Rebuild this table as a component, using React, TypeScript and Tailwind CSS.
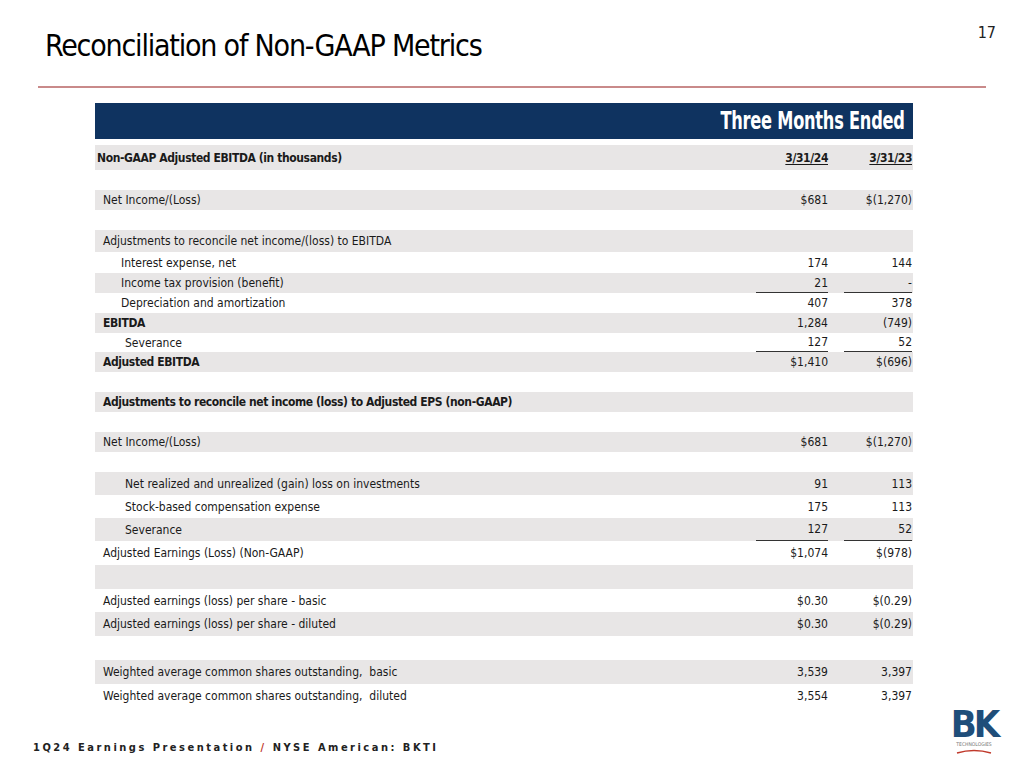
import React from "react";

type Row = {
  label?: string;
  v1?: string;
  v2?: string;
  gray?: boolean;
  bold?: boolean;
  indent?: number;
  line?: boolean;
  h: number;
};

const rows: Row[] = [
  { label: "Net Income/(Loss)", v1: "$681", v2: "$(1,270)", gray: true, h: 20 },
  { h: 20 },
  { label: "Adjustments to reconcile net income/(loss) to EBITDA", gray: true, h: 22 },
  { label: "Interest expense, net", v1: "174", v2: "144", indent: 18, h: 21 },
  { label: "Income tax provision (benefit)", v1: "21", v2: "-", gray: true, indent: 18, line: true, h: 20 },
  { label: "Depreciation and amortization", v1: "407", v2: "378", indent: 18, h: 20 },
  { label: "EBITDA", v1: "1,284", v2: "(749)", gray: true, bold: true, h: 20 },
  { label: "Severance", v1: "127", v2: "52", indent: 22, line: true, h: 19 },
  { label: "Adjusted EBITDA", v1: "$1,410", v2: "$(696)", gray: true, bold: true, h: 20 },
  { h: 20 },
  { label: "Adjustments to reconcile net income (loss) to Adjusted EPS (non-GAAP)", gray: true, bold: true, h: 20 },
  { h: 20 },
  { label: "Net Income/(Loss)", v1: "$681", v2: "$(1,270)", gray: true, h: 20 },
  { h: 20 },
  { label: "Net realized and unrealized (gain) loss on investments", v1: "91", v2: "113", gray: true, indent: 22, h: 23 },
  { label: "Stock-based compensation expense", v1: "175", v2: "113", indent: 22, h: 23 },
  { label: "Severance", v1: "127", v2: "52", gray: true, indent: 22, line: true, h: 23 },
  { label: "Adjusted Earnings (Loss) (Non-GAAP)", v1: "$1,074", v2: "$(978)", h: 24 },
  { gray: true, h: 24 },
  { label: "Adjusted earnings (loss) per share - basic", v1: "$0.30", v2: "$(0.29)", h: 23 },
  { label: "Adjusted earnings (loss) per share - diluted", v1: "$0.30", v2: "$(0.29)", gray: true, h: 24 },
  { h: 24 },
  { label: "Weighted average common shares outstanding,  basic", v1: "3,539", v2: "3,397", gray: true, h: 24 },
  { label: "Weighted average common shares outstanding,  diluted", v1: "3,554", v2: "3,397", h: 23 },
];

const FONT = "font-['DejaVu_Sans_Condensed',Lato,sans-serif]";

const TableRow = ({ row }: { row: Row }) => (
  <div
    className={`flex items-center ${row.gray ? "bg-[#e8e6e6]" : "bg-white"}`}
    style={{ height: row.h }}
  >
    <div
      className={`flex-1 truncate whitespace-pre ${row.bold ? "font-bold tracking-[-0.4px]" : ""}`}
      style={{ paddingLeft: 8 + (row.indent ?? 0) }}
    >
      {row.label}
    </div>
    <div
      className={`flex h-full w-[72px] items-center justify-end ${
        row.line ? "border-b border-[#333]" : ""
      }`}
    >
      {row.v1}
    </div>
    <div className="w-[16px]" />
    <div
      className={`flex h-full w-[68px] items-center justify-end ${
        row.line ? "border-b border-[#333]" : ""
      }`}
    >
      {row.v2}
    </div>
    <div className="w-[1px]" />
  </div>
);

const Logo = () => (
  <div className="flex w-[48px] flex-col items-center">
    <div className="text-[38px] font-bold leading-[32px] tracking-[-3px] text-[#1f4e7a]">
      BK
    </div>
    <div className="mt-[1px] text-[5px] leading-[6px] text-[#777]">TECHNOLOGIES</div>
    <svg width="40" height="6" viewBox="0 0 40 6" className="mt-[1px]">
      <path d="M3 5 Q20 0 37 5" fill="none" stroke="#c0392b" strokeWidth="1.6" />
    </svg>
  </div>
);

export default function App() {
  return (
    <div className={`relative flex h-[768px] w-[1024px] flex-col overflow-hidden bg-white text-[#1a1a1a] ${FONT}`}>
      <div className="flex h-[86px] items-start justify-between">
        <h1 className="ml-[45px] mt-[26px] text-[30px] font-normal leading-[40px] tracking-[-1.2px] text-black">
          Reconciliation of Non-GAAP Metrics
        </h1>
        <div className="mr-[28px] mt-[21px] text-[16px] text-[#222]">17</div>
      </div>
      <div className="ml-[38px] h-[2px] w-[948px] bg-[#c98a8a]" />

      <div className="ml-[95px] mt-[15px] w-[818px] text-[12px]">
        <div className="flex h-[36px] items-center justify-end bg-[#0f3360] pr-[8px] text-white">
          <span className="origin-right scale-x-[0.75] text-[24px] font-bold tracking-[-0.3px]">
            Three Months Ended
          </span>
        </div>
        <div className="h-[6px]" />
        <div className="flex h-[25px] items-center bg-[#e8e6e6] font-bold tracking-[-0.4px]">
          <div className="flex-1 pl-[2px]">Non-GAAP Adjusted EBITDA (in thousands)</div>
          <div className="w-[72px] text-right underline underline-offset-2">3/31/24</div>
          <div className="w-[16px]" />
          <div className="w-[68px] text-right underline underline-offset-2">3/31/23</div>
          <div className="w-[1px]" />
        </div>
        <div className="h-[20px]" />
        {rows.map((row, i) => (
          <TableRow key={i} row={row} />
        ))}
      </div>

      <div className="mt-auto flex items-end justify-between pb-[14px]">
        <div className="mb-[-2px] ml-[33px] text-[11px] font-bold tracking-[2.5px] text-[#222]">
          1Q24 Earnings Presentation <span className="text-[#c0392b]">/</span> NYSE American: BKTI
        </div>
        <div className="mr-[26px]">
          <Logo />
        </div>
      </div>
    </div>
  );
}
